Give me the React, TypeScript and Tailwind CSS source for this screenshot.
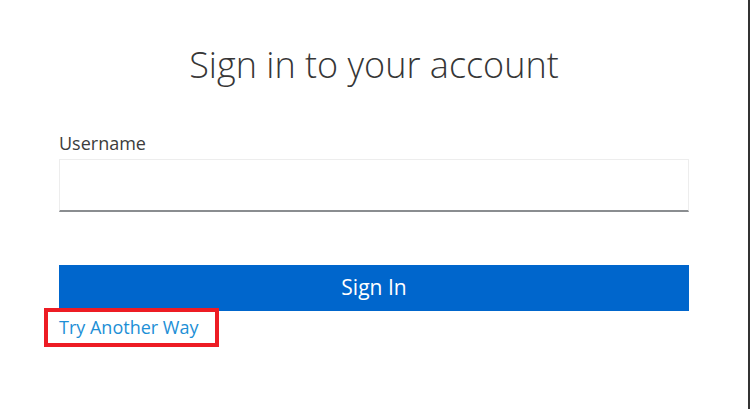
export default function App() {
  return (
    <div
      className="w-[750px] h-[409px] bg-white border-r-2 border-[#333] overflow-hidden"
      style={{ fontFamily: '"Open Sans", "Liberation Sans", sans-serif' }}
    >
      <div className="px-[59px] pt-[38px]">
        <h1 className="text-center text-[36px] leading-[54px] font-light text-[#363636]">
          Sign in to your account
        </h1>

        <form className="mt-[38px]" onSubmit={(e) => e.preventDefault()}>
          <label htmlFor="username" className="block text-[18px] leading-[27px] text-[#3c3c3c]">
            Username
          </label>
          <input
            id="username"
            type="text"
            className="mt-[2px] block w-full h-[53px] border border-[#ededed] border-b-2 border-b-[#8a8d90] bg-white outline-none"
          />

          <button
            type="submit"
            className="mt-[53px] block w-full h-[46px] bg-[#0066cc] text-white text-[21px]"
          >
            Sign In
          </button>
        </form>

        {/* highlight box around the alternate-login link */}
        <div className="-ml-[15px] -mt-[3px] w-[175px] h-[39px] border-[4px] border-[#ed1c24] pl-[11px] relative">
          <a href="#" className="block text-[18px] leading-[30px] text-[#1d8fd6]">
            Try Another Way
          </a>
        </div>
      </div>
    </div>
  );
}
